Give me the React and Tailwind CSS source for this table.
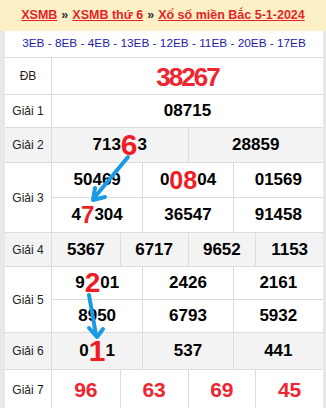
import React from "react";

const B = "border-[#dcdcdc]";

function Num({ children, red, size = "text-[17px]" }) {
  return (
    <div className={`flex items-center justify-center font-bold ${size} ${red ? "text-[#ef2530]" : "text-black"}`}>
      {children}
    </div>
  );
}

function Big({ children, size }) {
  return <span className={`text-[#f21c24] leading-none ${size}`}>{children}</span>;
}

function Row({ label, h, gray, children }) {
  return (
    <div className={`flex border-b ${B} ${gray ? "bg-[#f3f3f3]" : "bg-white"} ${h}`}>
      <div className={`w-[47px] shrink-0 border-r ${B} flex items-center justify-center text-[12px] text-[#222]`}>
        {label}
      </div>
      <div className="flex-1 flex flex-col">{children}</div>
    </div>
  );
}

function Cells({ cols, children, h, last }) {
  const items = React.Children.toArray(children);
  return (
    <div className={`grid ${cols} ${h} ${last ? "" : `border-b ${B}`} flex-1`}>
      {items.map((c, i) => (
        <div key={i} className={`flex items-center justify-center ${i > 0 ? `border-l ${B}` : ""}`}>
          {c}
        </div>
      ))}
    </div>
  );
}

export default function App() {
  return (
    <div className="relative w-[326px] h-[408px] overflow-hidden bg-white font-['Liberation_Sans',Arial,sans-serif]">
      <div className="h-[31px] bg-[#fcf1c6] flex items-center justify-center gap-[4px] text-[12.5px] font-bold">
        <span className="text-[#ea1f29] underline">XSMB</span>
        <span className="text-[#333]">»</span>
        <span className="text-[#ea1f29] underline">XSMB thứ 6</span>
        <span className="text-[#333]">»</span>
        <span className="text-[#ea1f29] underline">Xổ số miền Bắc 5-1-2024</span>
      </div>
      <div className="border-l-[5px] border-r-[3px] border-[#e8e8e8]">
        <div className={`h-[27px] flex items-center justify-center text-[11.8px] text-[#2222aa] border-b ${B}`}>
          3EB - 8EB - 4EB - 13EB - 12EB - 11EB - 20EB - 17EB
        </div>
        <Row label="ĐB" h="h-[37px]">
          <Cells cols="grid-cols-1" last>
            <Num red size="text-[26px] tracking-[-2px]">38267</Num>
          </Cells>
        </Row>
        <Row label="Giải 1" h="h-[33px]">
          <Cells cols="grid-cols-1" last>
            <Num>08715</Num>
          </Cells>
        </Row>
        <Row label="Giải 2" h="h-[35px]" gray>
          <Cells cols="grid-cols-2" last>
            <Num>
              713<Big size="text-[30px]">6</Big>3
            </Num>
            <Num>28859</Num>
          </Cells>
        </Row>
        <Row label="Giải 3" h="h-[70px]">
          <Cells cols="grid-cols-3">
            <Num>50469</Num>
            <Num>
              0<Big size="text-[25px]">08</Big>04
            </Num>
            <Num>01569</Num>
          </Cells>
          <Cells cols="grid-cols-3" last>
            <Num>
              4<Big size="text-[24px]">7</Big>304
            </Num>
            <Num>36547</Num>
            <Num>91458</Num>
          </Cells>
        </Row>
        <Row label="Giải 4" h="h-[34px]" gray>
          <Cells cols="grid-cols-4" last>
            <Num>5367</Num>
            <Num>6717</Num>
            <Num>9652</Num>
            <Num>1153</Num>
          </Cells>
        </Row>
        <Row label="Giải 5" h="h-[66px]">
          <Cells cols="grid-cols-3">
            <Num>
              9<Big size="text-[28px]">2</Big>01
            </Num>
            <Num>2426</Num>
            <Num>2161</Num>
          </Cells>
          <Cells cols="grid-cols-3" last>
            <Num>8950</Num>
            <Num>6793</Num>
            <Num>5932</Num>
          </Cells>
        </Row>
        <Row label="Giải 6" h="h-[37px]" gray>
          <Cells cols="grid-cols-3" last>
            <Num>
              0<Big size="text-[30px]">1</Big>1
            </Num>
            <Num>537</Num>
            <Num>441</Num>
          </Cells>
        </Row>
        <Row label="Giải 7" h="h-[40px]">
          <Cells cols="grid-cols-4" last>
            <Num red size="text-[21px]">96</Num>
            <Num red size="text-[21px]">63</Num>
            <Num red size="text-[21px]">69</Num>
            <Num red size="text-[21px]">45</Num>
          </Cells>
        </Row>
      </div>
      <svg className="absolute left-0 top-0 pointer-events-none" width="326" height="408" viewBox="0 0 326 408">
        <g stroke="#1b9ae4" strokeWidth="4" strokeLinecap="round" strokeLinejoin="round" fill="none">
          <path d="M128 157 L94 198" />
          <path d="M95 188 L93 200 L105 197" />
          <path d="M89 295 Q92 312 96 335" />
          <path d="M89 328 L97 337 L103 329" />
        </g>
      </svg>
    </div>
  );
}
